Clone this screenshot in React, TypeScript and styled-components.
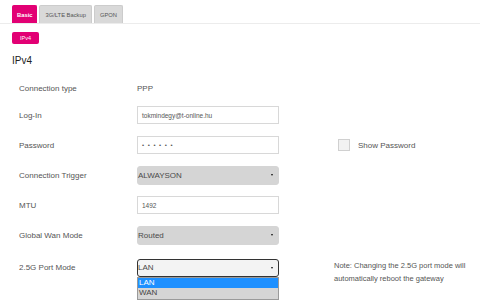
import styled, { createGlobalStyle } from "styled-components";

const GlobalStyle = createGlobalStyle`
  body {
    margin: 0;
    background: #ffffff;
    font-family: "Liberation Sans", Arial, sans-serif;
  }
`;

const PINK = "#e20074";

export default function App() {
  return (
    <>
      <GlobalStyle />
      <Page>
        <TabBar>
          <Tab $active>Basic</Tab>
          <Tab>3G/LTE Backup</Tab>
          <Tab>GPON</Tab>
        </TabBar>
        <SubTabs>
          <SubTab>IPv4</SubTab>
        </SubTabs>
        <Heading>IPv4</Heading>
        <Form>
          <Row $h={24}>
            <Label>Connection type</Label>
            <Value>PPP</Value>
          </Row>
          <Row>
            <Label>Log-In</Label>
            <TextInput>tokmindegy@t-online.hu</TextInput>
          </Row>
          <Row>
            <Label>Password</Label>
            <TextInput $dots>••••••</TextInput>
            <Side>
              <Checkbox />
              <SideText>Show Password</SideText>
            </Side>
          </Row>
          <Row>
            <Label>Connection Trigger</Label>
            <Select>
              ALWAYSON
              <Arrow />
            </Select>
          </Row>
          <Row>
            <Label>MTU</Label>
            <TextInput>1492</TextInput>
          </Row>
          <Row>
            <Label>Global Wan Mode</Label>
            <Select>
              Routed
              <Arrow />
            </Select>
          </Row>
          <Row>
            <Label>2.5G Port Mode</Label>
            <Select $open>
              LAN
              <Arrow />
              <Options>
                <Option $selected>LAN</Option>
                <Option>WAN</Option>
              </Options>
            </Select>
            <Note>
              Note: Changing the 2.5G port mode will
              <br />
              automatically reboot the gateway
            </Note>
          </Row>
        </Form>
      </Page>
    </>
  );
}

const Page = styled.div`
  width: 480px;
  height: 302px;
  overflow: hidden;
  padding-top: 5px;
  box-sizing: border-box;
`;

const TabBar = styled.div`
  display: flex;
  gap: 2px;
  padding-left: 12px;
  border-bottom: 1px solid #ececec;
`;

const Tab = styled.div<{ $active?: boolean }>`
  height: 18px;
  padding: 0 ${(p) => (p.$active ? "4px" : "5px")};
  display: flex;
  align-items: center;
  font-size: 5.8px;
  font-weight: ${(p) => (p.$active ? 700 : 400)};
  color: ${(p) => (p.$active ? "#ffffff" : "#555555")};
  background: ${(p) => (p.$active ? PINK : "#d9d9d9")};
  border: 1px solid ${(p) => (p.$active ? PINK : "#cccccc")};
  border-bottom: none;
  border-radius: 2px 2px 0 0;
  box-sizing: border-box;
`;

const SubTabs = styled.div`
  display: flex;
  padding: 8px 0 0 12px;
`;

const SubTab = styled.div`
  width: 27px;
  height: 12px;
  display: flex;
  align-items: center;
  justify-content: center;
  border-radius: 2px;
  background: ${PINK};
  color: #ffffff;
  font-size: 5.5px;
`;

const Heading = styled.h2`
  margin: 10px 0 8px 12px;
  height: 14px;
  line-height: 14px;
  font-size: 10px;
  font-weight: 500;
  color: #222222;
`;

const Form = styled.div`
  display: flex;
  flex-direction: column;
  padding-left: 19px;
`;

const Row = styled.div<{ $h?: number }>`
  display: grid;
  grid-template-columns: 118px 142px 1fr;
  align-items: center;
  height: ${(p) => p.$h ?? 30}px;
`;

const Label = styled.div`
  font-size: 8px;
  color: #555555;
`;

const Value = styled.div`
  font-size: 8px;
  color: #555555;
`;

const TextInput = styled.div<{ $dots?: boolean }>`
  height: 18px;
  box-sizing: border-box;
  border: 1px solid #d8d8d8;
  background: #ffffff;
  display: flex;
  align-items: center;
  padding-left: 4px;
  font-size: ${(p) => (p.$dots ? "6px" : "6.5px")};
  letter-spacing: ${(p) => (p.$dots ? "3.6px" : "0")};
  color: #555555;
`;

const Select = styled.div<{ $open?: boolean }>`
  position: relative;
  height: ${(p) => (p.$open ? "18px" : "19px")};
  box-sizing: border-box;
  display: flex;
  align-items: center;
  padding-left: 0;
  font-size: 8px;
  color: #4a4a4a;
  background: ${(p) => (p.$open ? "#f3f3f3" : "#d5d5d5")};
  border: 1px solid ${(p) => (p.$open ? "#333333" : "#d5d5d5")};
  border-radius: 3px;
`;

const Arrow = styled.span`
  position: absolute;
  right: 5px;
  top: 50%;
  margin-top: -1px;
  width: 0;
  height: 0;
  border-left: 1.5px solid transparent;
  border-right: 1.5px solid transparent;
  border-top: 2.5px solid #111111;
`;

const Options = styled.div`
  position: absolute;
  left: -1px;
  right: -1px;
  top: 17px;
  border: 1px solid #9a9a9a;
  background: #d5d5d5;
  z-index: 2;
`;

const Option = styled.div<{ $selected?: boolean }>`
  height: 10.5px;
  line-height: 10.5px;
  padding-left: 1px;
  font-size: 8px;
  color: ${(p) => (p.$selected ? "#ffffff" : "#444444")};
  background: ${(p) => (p.$selected ? "#1e90ff" : "#d5d5d5")};
`;

const Side = styled.div`
  display: flex;
  align-items: center;
  gap: 8px;
  margin-left: 59px;
`;

const Checkbox = styled.span`
  width: 12px;
  height: 12px;
  box-sizing: border-box;
  border: 1px solid #d0d0d0;
  background: #f2f2f2;
`;

const SideText = styled.span`
  font-size: 8px;
  color: #555555;
`;

const Note = styled.div`
  align-self: start;
  margin: 9px 0 0 55px;
  font-size: 7.5px;
  line-height: 13px;
  color: #555555;
  white-space: nowrap;
`;
